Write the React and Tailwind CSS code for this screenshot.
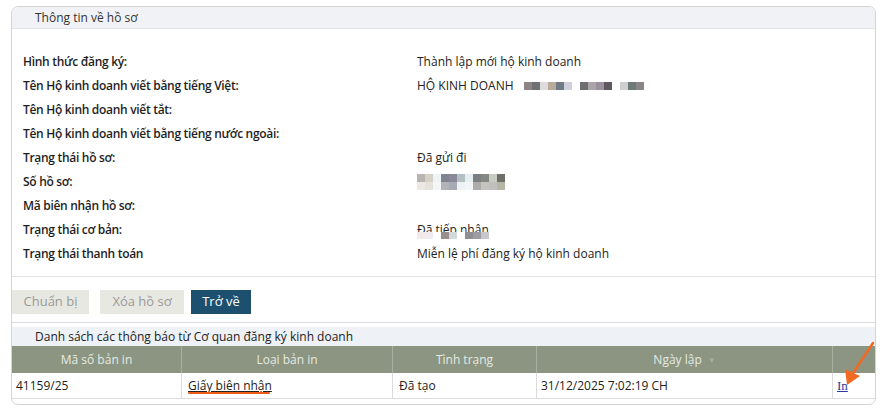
const rows = [
  ["Hình thức đăng ký:", "text", "Thành lập mới hộ kinh doanh"],
  ["Tên Hộ kinh doanh viết bằng tiếng Việt:", "name", "HỘ KINH DOANH"],
  ["Tên Hộ kinh doanh viết tắt:", "none"],
  ["Tên Hộ kinh doanh viết bằng tiếng nước ngoài:", "none"],
  ["Trạng thái hồ sơ:", "text", "Đã gửi đi"],
  ["Số hồ sơ:", "blur"],
  ["Mã biên nhận hồ sơ:", "none"],
  ["Trạng thái cơ bản:", "status", "Đã tiếp nhận"],
  ["Trạng thái thanh toán", "text", "Miễn lệ phí đăng ký hộ kinh doanh"],
];

const nameBlur = ["#8e8385", "#6f7075", "#dcdcdc", "#b8ab9e", "#6f7a86", "#cfd0dc", "#fff", "#6e6d70", "#aba4a8", "#9a919d", "#5d5860", "#fff", "#cfcfcf", "#6f7a78", "#8a8587"];
const soTop = ["#b8b6b0", "#d6d0c6", "#eef3f5", "#7f8390", "#8a8898", "#b5c0c5", "#e5eef1", "#7c7f81", "#848782", "#c8cac4", "#6e6f66"];
const soBot = ["#ebe8e6", "#e6e2dc", "#f3f5f6", "#b2b3b8", "#a7aab4", "#eff1f4", "#f3f6f8", "#aeaca8", "#c6c4bf", "#c1bfbd", "#b6b5a6"];

function Blocks({ colors }) {
  return (
    <div className="flex">
      {colors.map((c, i) => (
        <div key={i} className="h-[8px] w-[8px]" style={{ backgroundColor: c }} />
      ))}
    </div>
  );
}

export default function App() {
  return (
    <div className="h-[410px] w-[886px] bg-white pl-[11px] pt-[6px] font-['Open_Sans',sans-serif] text-[12px] text-[#222]">
      <div className="relative flex h-[399px] w-[865px] flex-col overflow-hidden rounded-[7px] border border-[#d3d3d3]">
        <div className="flex h-[22px] shrink-0 items-center border-b border-[#e0e3e7] bg-[#f0f2f5] pl-[23px] text-[#333]">
          Thông tin về hồ sơ
        </div>
        <div className="mt-[21px] flex flex-col pl-[11px]">
          {rows.map(([label, kind, value], i) => (
            <div key={i} className="flex h-[24px] items-center">
              <div className="w-[394px] font-semibold tracking-[-0.3px] text-[#1e1e1e]">{label}</div>
              {kind === "text" && <div>{value}</div>}
              {kind === "name" && (
                <div className="flex items-center gap-[10px]">
                  <span>{value}</span>
                  <Blocks colors={nameBlur} />
                </div>
              )}
              {kind === "blur" && (
                <div className="flex flex-col">
                  <Blocks colors={soTop} />
                  <Blocks colors={soBot} />
                </div>
              )}
              {kind === "status" && (
                <div className="relative">
                  <span>{value}</span>
                  <div className="absolute left-0 top-[11px] flex">
                    {["#f3e9ea", "#f1eaf0", "#fff", "#9a8e8a", "#d3d9da", "#fff", "#8f8f93", "#9c9ca4", "#c8c6cb"].map((c, j) => (
                      <div key={j} className="h-[7px] w-[8px]" style={{ backgroundColor: c }} />
                    ))}
                  </div>
                </div>
              )}
            </div>
          ))}
        </div>
        <div className="mt-[10px] border-b border-[#e2e2e2]" />
        <div className="flex gap-[11px] pt-[13px] pb-[8px]">
          <button className="h-[24px] w-[77px] bg-[#e8e8e3] text-[13px] text-[#9a9a96]">Chuẩn bị</button>
          <button className="h-[24px] w-[84px] bg-[#e8e8e3] text-[13px] text-[#9a9a96]">Xóa hồ sơ</button>
          <button className="-ml-[4px] h-[24px] w-[60px] bg-[#1d4f6e] text-[13px] text-white">Trở về</button>
        </div>
        <div className="border-t border-[#dcdcdc]" />
        <div className="mt-[4px] flex h-[19px] items-center bg-[#eef1f6] pl-[23px] text-[#222]">
          Danh sách các thông báo từ Cơ quan đăng ký kinh doanh
        </div>
        <div className="grid grid-cols-[170px_211px_144px_296px_1fr] bg-[#8b9581] text-[#e6eae3]">
          <div className="flex h-[27px] items-center justify-center border-r border-[#a9b0a2]">Mã số bản in</div>
          <div className="flex h-[27px] items-center justify-center border-r border-[#a9b0a2]">Loại bản in</div>
          <div className="flex h-[27px] items-center justify-center border-r border-[#a9b0a2]">Tình trạng</div>
          <div className="flex h-[27px] items-center justify-center gap-[6px] border-r border-[#a9b0a2]">
            Ngày lập
            <span className="text-[8px] text-[#a6ad9f]">▼</span>
          </div>
          <div />
        </div>
        <div className="grid grid-cols-[170px_211px_144px_296px_1fr] border-b border-[#dcdcdc] text-[#222]">
          <div className="flex h-[25px] items-center border-r border-[#dcdcdc] pl-[4px] font-medium">41159/25</div>
          <div className="relative flex h-[25px] items-center border-r border-[#dcdcdc] pl-[6px]">
            <span className="underline">Giấy biên nhận</span>
            <div className="absolute left-[6px] top-[19px] h-[2px] w-[82px] rounded-full bg-[#f05a1a]" />
          </div>
          <div className="flex h-[25px] items-center border-r border-[#dcdcdc] pl-[6px]">Đã tạo</div>
          <div className="flex h-[25px] items-center border-r border-[#dcdcdc] pl-[4px] font-medium">31/12/2025 7:02:19 CH</div>
          <div className="flex h-[25px] items-center pl-[4px]">
            <span className="font-['Liberation_Serif',serif] text-[13px] text-[#2a3c9c] underline">In</span>
          </div>
        </div>
        <svg className="absolute left-[820px] top-[334px]" width="46" height="48" viewBox="0 0 46 48">
          <path d="M41 2 L21 32" stroke="#f06a24" strokeWidth="2.5" strokeLinecap="round" fill="none" />
          <path d="M15 44 L13 28 L28 35 Z" fill="#f06a24" />
        </svg>
      </div>
    </div>
  );
}
